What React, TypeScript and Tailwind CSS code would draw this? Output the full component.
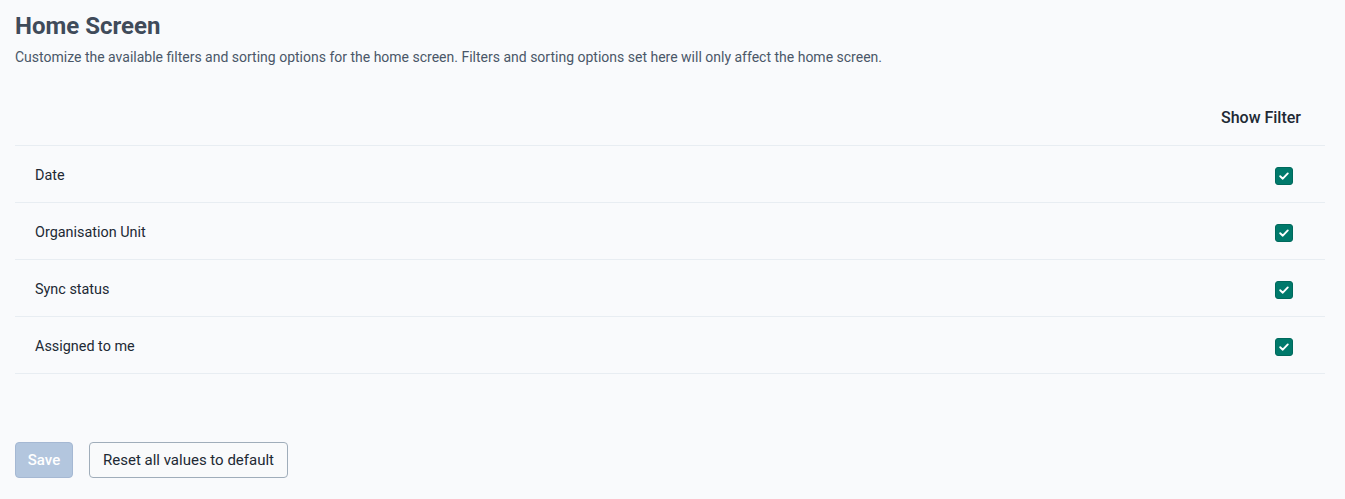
import React from "react";

const rows = ["Date", "Organisation Unit", "Sync status", "Assigned to me"];

function Check() {
  return (
    <span className="flex h-[18px] w-[18px] items-center justify-center rounded-[3px] border border-[#00695c] bg-[#00796b]">
      <svg width="12" height="12" viewBox="0 0 12 12" fill="none">
        <path d="M2.2 6.2 L4.8 8.7 L9.8 3.4" stroke="#ffffff" strokeWidth="1.9" strokeLinecap="round" strokeLinejoin="round" />
      </svg>
    </span>
  );
}

export default function App() {
  return (
    <div className="min-h-[499px] bg-[#f9fafc] px-[15px] pt-[11px] text-[#212934]" style={{ fontFamily: "Roboto, 'Liberation Sans', sans-serif" }}>
      <h1 className="text-[24px] font-bold leading-[30px] text-[#404b5a]">Home Screen</h1>
      <p className="mt-[6px] text-[14px] leading-[20px] text-[#4a5768]">
        Customize the available filters and sorting options for the home screen. Filters and sorting options set here will only affect the home screen.
      </p>
      <div className="mt-[23px] w-[1310px]">
        <div className="flex h-[56px] items-center justify-end border-b border-[#e8edf2] pr-[24px]">
          <span className="text-[16px] font-medium text-[#212934]">Show Filter</span>
        </div>
        {rows.map((r) => (
          <div key={r} className="flex h-[57px] items-center justify-between border-b border-[#e8edf2] pl-[20px] pr-[32px] pt-[3px]">
            <span className="text-[14.4px] text-[#212934]">{r}</span>
            <Check />
          </div>
        ))}
      </div>
      <div className="mt-[68px] flex gap-[16px]">
        <button className="h-[36px] w-[58px] rounded-[4px] border border-[#a5b8d3] bg-[#b3c6de] text-[15px] font-medium text-white">
          Save
        </button>
        <button className="h-[36px] w-[199px] rounded-[4px] border border-[#a0adba] bg-[#f9fafb] text-[15px] font-normal text-[#212934]">
          Reset all values to default
        </button>
      </div>
    </div>
  );
}
